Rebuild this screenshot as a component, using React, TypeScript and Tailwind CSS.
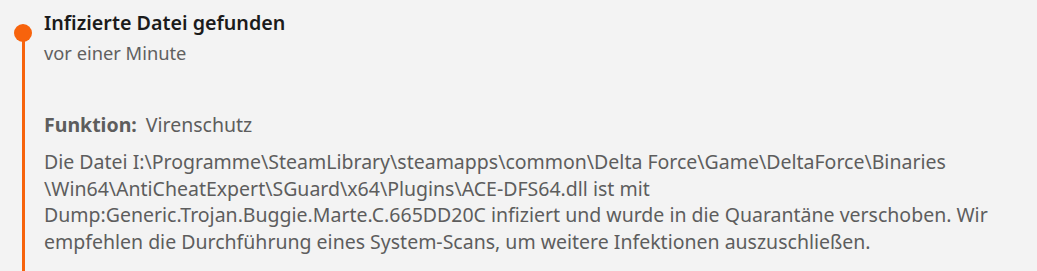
import React from "react";

const lines = [
  "Die Datei I:\\Programme\\SteamLibrary\\steamapps\\common\\Delta Force\\Game\\DeltaForce\\Binaries",
  "\\Win64\\AntiCheatExpert\\SGuard\\x64\\Plugins\\ACE-DFS64.dll ist mit",
  "Dump:Generic.Trojan.Buggie.Marte.C.665DD20C infiziert und wurde in die Quarantäne verschoben. Wir",
  "empfehlen die Durchführung eines System-Scans, um weitere Infektionen auszuschließen.",
];

export default function App() {
  return (
    <div
      className="w-[1037px] h-[271px] bg-[#f3f3f3] flex overflow-hidden"
      style={{ fontFamily: '"Segoe UI", "Noto Sans", "Open Sans", sans-serif' }}
    >
      <div className="w-[46px] shrink-0 flex flex-col items-center pt-[24px]">
        <div className="w-[18px] h-[18px] rounded-full bg-[#f7630c] shrink-0" />
        <div className="w-[3px] flex-1 bg-[#f7630c] -mt-[1px] ml-[1px]" />
      </div>
      <div className="flex flex-col pt-[9px]">
        <div className="text-[19.7px] leading-[28px] font-semibold text-[#1b1b1b] -ml-[2px]">
          Infizierte Datei gefunden
        </div>
        <div className="text-[18.3px] leading-[24px] text-[#606060] mt-[4px] -ml-[2px]">
          vor einer Minute
        </div>
        <div className="mt-[46px] text-[19.5px] leading-[27px] text-[#5d5d5d] -ml-[2px]">
          <span className="font-bold">Funktion:</span>
          <span className="ml-[9px]">Virenschutz</span>
        </div>
        <div className="mt-[11px] text-[19.5px] leading-[26.7px] text-[#5d5d5d] -ml-[2px]">
          {lines.map((l, i) => (
            <div key={i} className="whitespace-nowrap">
              {l}
            </div>
          ))}
        </div>
      </div>
    </div>
  );
}
